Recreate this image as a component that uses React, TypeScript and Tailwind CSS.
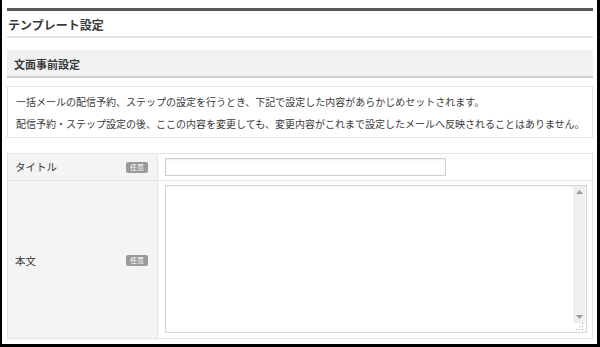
import React from "react";

const font = { fontFamily: '"Noto Sans CJK JP", "Noto Sans", sans-serif' };

function Badge() {
  return (
    <span className="flex h-[11px] w-[22px] items-center justify-center rounded-[2px] bg-[#9a9a9a] text-[7px] leading-none text-white">
      任意
    </span>
  );
}

export default function App() {
  return (
    <div
      className="h-[347px] w-[600px] overflow-hidden border-b-[3px] border-l-2 border-r-[3px] border-black bg-white text-[#3a3a3a]"
      style={font}
    >
      <div className="pl-[5px] pr-[4px] pt-[8px]">
        {/* Page title */}
        <div className="border-t-[3px] border-[#5a5a5a]">
          <div className="flex h-[27px] items-center border-b-2 border-[#e2e2e2] pl-[1px] pt-[3px] text-[12px] font-bold leading-none">
            テンプレート設定
          </div>
        </div>

        {/* Section header */}
        <div className="mt-[12px] flex h-[28px] items-center border-b-2 border-[#cfcfcf] bg-[#f1f1f1] pl-[7px] pt-[2px] text-[11px] font-bold leading-none">
          文面事前設定
        </div>

        {/* Info box */}
        <div className="mt-[8px] flex h-[52px] flex-col justify-center gap-[10px] border border-[#e2e2e2] pl-[8px] pt-[1px] text-[10px] leading-[12px]">
          <p>一括メールの配信予約、ステップの設定を行うとき、下記で設定した内容があらかじめセットされます。</p>
          <p>配信予約・ステップ設定の後、ここの内容を変更しても、変更内容がこれまで設定したメールへ反映されることはありません。</p>
        </div>

        {/* Form table */}
        <div className="mt-[15px] border border-[#e4e4e4] text-[10.5px]">
          <div className="flex h-[27px] border-b border-[#e4e4e4]">
            <div className="flex w-[150px] items-center justify-between border-r border-[#e4e4e4] bg-[#f3f4f3] pl-[7px] pr-[9px]">
              <span>タイトル</span>
              <Badge />
            </div>
            <div className="flex flex-1 items-center pl-[7px]">
              <input className="h-[18px] w-[281px] border border-[#cfcfcf] bg-white shadow-[inset_0_1px_2px_rgba(0,0,0,0.08)] outline-none" />
            </div>
          </div>
          <div className="flex h-[157px]">
            <div className="flex w-[150px] items-center justify-between border-r border-[#e4e4e4] bg-[#f3f4f3] pl-[7px] pr-[9px] pt-[2px]">
              <span>本文</span>
              <Badge />
            </div>
            <div className="flex flex-1 pl-[7px] pt-[4px]">
              <div className="relative h-[148px] w-[422px]">
                <textarea className="block h-full w-full resize-none overflow-hidden border border-[#d6d6d6] bg-white shadow-[inset_0_1px_2px_rgba(0,0,0,0.06)] outline-none" />
                {/* scrollbar */}
                <div className="absolute right-[2px] top-[1px] flex h-[137px] w-[12px] flex-col items-center justify-between bg-[#efefef] py-[4px]">
                  <svg width="7" height="4" viewBox="0 0 7 4">
                    <path d="M3.5 0 L7 4 L0 4 Z" fill="#9a9a9a" />
                  </svg>
                  <svg width="7" height="4" viewBox="0 0 7 4">
                    <path d="M0 0 L7 0 L3.5 4 Z" fill="#9a9a9a" />
                  </svg>
                </div>
                {/* resize grip */}
                <svg className="absolute bottom-[2px] right-[3px]" width="8" height="8" viewBox="0 0 8 8">
                  <rect x="6" y="0" width="1.2" height="1.2" fill="#b5b5b5" />
                  <rect x="3" y="3" width="1.2" height="1.2" fill="#b5b5b5" />
                  <rect x="6" y="3" width="1.2" height="1.2" fill="#b5b5b5" />
                  <rect x="0" y="6" width="1.2" height="1.2" fill="#b5b5b5" />
                  <rect x="3" y="6" width="1.2" height="1.2" fill="#b5b5b5" />
                  <rect x="6" y="6" width="1.2" height="1.2" fill="#b5b5b5" />
                </svg>
              </div>
            </div>
          </div>
        </div>
      </div>
    </div>
  );
}
